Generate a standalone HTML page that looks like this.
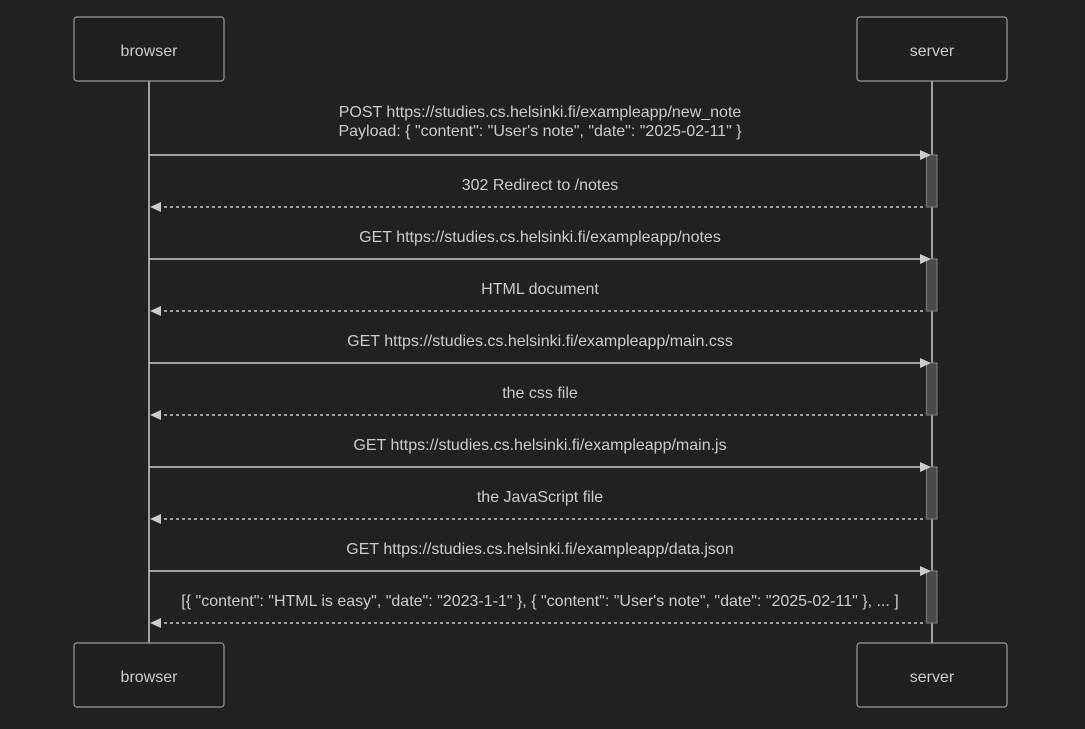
<!DOCTYPE html><html><head><style>body{margin:0;background:#212121}svg{display:block}text{font-family:"Liberation Sans",sans-serif;font-size:16px;fill:#ccc;text-anchor:middle}</style></head><body>
<svg width="1085" height="729" xmlns="http://www.w3.org/2000/svg">
<rect width="1085" height="729" fill="#212121"/>
<g stroke="#ccc" stroke-width="1.5"><line x1="149" y1="81" x2="149" y2="643"/><line x1="932" y1="81" x2="932" y2="643"/></g>
<g fill="#1f2020" stroke="#9a9a9a" stroke-width="1.2">
<rect x="74" y="17" width="150" height="64" rx="3"/><rect x="857" y="17" width="150" height="64" rx="3"/>
<rect x="74" y="643" width="150" height="64" rx="3"/><rect x="857" y="643" width="150" height="64" rx="3"/></g>
<text x="149" y="56">browser</text><text x="932" y="56">server</text>
<text x="149" y="682">browser</text><text x="932" y="682">server</text>
<g fill="#4a4a4a" stroke="#777" stroke-width="1.2">
<rect x="926.5" y="155" width="10.5" height="52"/><rect x="926.5" y="259" width="10.5" height="52"/><rect x="926.5" y="363" width="10.5" height="52"/><rect x="926.5" y="467" width="10.5" height="52"/><rect x="926.5" y="571" width="10.5" height="52"/></g>
<g stroke="#ccc" stroke-width="1.5">
<line x1="149" y1="155" x2="922" y2="155"/><line x1="149" y1="259" x2="922" y2="259"/><line x1="149" y1="363" x2="922" y2="363"/><line x1="149" y1="467" x2="922" y2="467"/><line x1="149" y1="571" x2="922" y2="571"/></g>
<g stroke="#ccc" stroke-width="1.5" stroke-dasharray="3,3">
<line x1="158" y1="207" x2="926" y2="207"/><line x1="158" y1="311" x2="926" y2="311"/><line x1="158" y1="415" x2="926" y2="415"/><line x1="158" y1="519" x2="926" y2="519"/><line x1="158" y1="623" x2="926" y2="623"/></g>
<g fill="#ccc">
<path d="M920 150 L931 155 L920 160Z"/><path d="M920 254 L931 259 L920 264Z"/><path d="M920 358 L931 363 L920 368Z"/><path d="M920 462 L931 467 L920 472Z"/><path d="M920 566 L931 571 L920 576Z"/>
<path d="M161 202 L150 207 L161 212Z"/><path d="M161 306 L150 311 L161 316Z"/><path d="M161 410 L150 415 L161 420Z"/><path d="M161 514 L150 519 L161 524Z"/><path d="M161 618 L150 623 L161 628Z"/></g>
<text x="540" y="117">POST https://studies.cs.helsinki.fi/exampleapp/new_note</text>
<text x="540" y="136">Payload: { "content": "User's note", "date": "2025-02-11" }</text>
<text x="540" y="190">302 Redirect to /notes</text>
<text x="540" y="242">GET https://studies.cs.helsinki.fi/exampleapp/notes</text>
<text x="540" y="294">HTML document</text>
<text x="540" y="346">GET https://studies.cs.helsinki.fi/exampleapp/main.css</text>
<text x="540" y="398">the css file</text>
<text x="540" y="450">GET https://studies.cs.helsinki.fi/exampleapp/main.js</text>
<text x="540" y="502">the JavaScript file</text>
<text x="540" y="554">GET https://studies.cs.helsinki.fi/exampleapp/data.json</text>
<text x="540" y="606">[{ "content": "HTML is easy", "date": "2023-1-1" }, { "content": "User's note", "date": "2025-02-11" }, ... ]</text>
</svg></body></html>
